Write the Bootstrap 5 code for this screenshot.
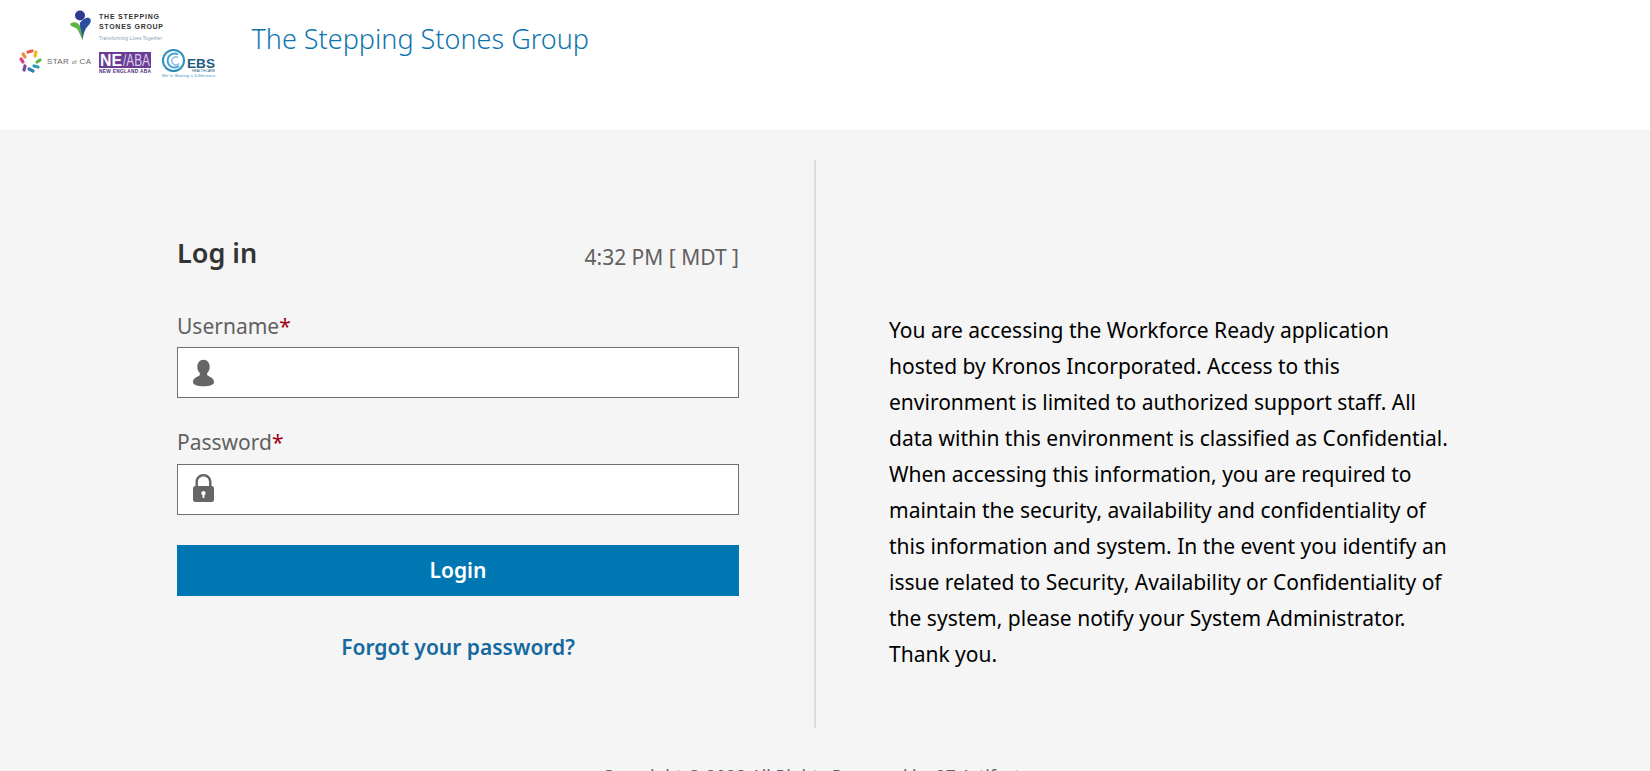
<!DOCTYPE html>
<html lang="en">
<head>
    <meta charset="utf-8">
    <title>Log in</title>
    <link href="https://cdn.jsdelivr.net/npm/bootstrap@5.3.3/dist/css/bootstrap.min.css" rel="stylesheet">
    <script src="https://cdn.jsdelivr.net/npm/bootstrap@5.3.3/dist/js/bootstrap.bundle.min.js"></script>
    <style>
        html, body { height: 771px; overflow: hidden; }
        body { font-family: "Noto Sans", "Open Sans", sans-serif; background: #f5f5f5; color: #000; }
        .top-bar { height: 130px; background: #fff; }
        .top-logo { width: 225px; height: 90px; flex: none; }
        .top-title { font-size: 27px; font-weight: 300; color: #0f75b0; margin: 21px 0 0 26.500px; line-height: 36px; }
        .main-area { height: 598px; padding-top: 30px; }
        .left-pane { width: 816px; height: 568px; padding: 75px 75px 0 177px; border-right: 2px solid #dcdcdc; flex: none; }
        .right-pane { padding: 0 0 0 73px; width: 680px; font-size: 21px; line-height: 36px; margin-top: 152px; }
        .login-title { font-size: 27px; font-weight: 600; color: #333; line-height: 36px; margin: 0; }
        .login-time { font-size: 21px; color: #616161; line-height: 36px; margin-top: 4px; }
        .login-head { margin-bottom: 37px; }
        .field-label { font-size: 21px; color: #616161; line-height: 28px; margin-bottom: 7px; display: block; }
        .field-label b { color: #a00016; font-weight: 400; }
        .field-box { height: 51px; background: #fff; border: 1px solid #707070; padding-left: 15px; margin-bottom: 30px; }
        .field-box svg { width: 21px; height: 28px; fill: #666; flex: none; }
        .field-box .lock-icon { margin-bottom: 3px; }
        .field-box input { border: 0; outline: 0; background: transparent; flex: 1; height: 100%; min-width: 0; }
        .btn-login { height: 51px; width: 100%; background: #0077b3; color: #fff; border: 0; border-radius: 0; font-weight: 600; font-size: 21px; }
        .btn-login:hover { background: #00689c; color: #fff; }
        .forgot-link { display: block; margin-top: 37px; text-align: center; font-size: 21px; font-weight: 600; color: #14699f; text-decoration: none; line-height: 28px; }
        .page-foot { font-size: 17.500px; color: #616161; text-align: center; line-height: 24px; padding: 36px 28px 0 0; }
    </style>
</head>
<body>
    <header class="top-bar d-flex align-items-start">
        <svg class="top-logo" viewBox="0 0 225 90" font-family="Liberation Sans, sans-serif">
            <circle cx="80" cy="15.500" r="5" fill="#2e3a8c"/>
            <path d="M80 23c2-3 6-6 9-5 3 1 2 5-1 8-3 3-5 8-5 14-3-5-4-11-3-17z" fill="#2a4f9e"/>
            <path d="M70 24c3-3 8-2 10 2 1 4 2 8 3 14-3-4-4-10-7-12-2-1-5-1-6-4z" fill="#5db346"/>
            <text x="99" y="19" font-size="7" font-weight="700" fill="#333" textLength="60">THE STEPPING</text>
            <text x="99" y="29" font-size="7" font-weight="700" fill="#333" textLength="64">STONES GROUP</text>
            <text x="99" y="40" font-size="4.500" fill="#7a9db5" textLength="63">Transforming Lives Together</text>
            <g fill="none" stroke-width="3.200" stroke-linecap="round">
                <path d="M28 52l4-1" stroke="#e8594b"/><path d="M36 52l-1 4" stroke="#f1b51c"/><path d="M40 60l-3 2" stroke="#5db346"/>
                <path d="M38 67l-4-1" stroke="#2a9db5"/><path d="M33 71l-4-2" stroke="#2a7fb5"/><path d="M24 70l1-4" stroke="#7a4aa0"/>
                <path d="M23 62l-2-3" stroke="#d9417e"/><path d="M23 54l2 3" stroke="#f08a3c"/>
            </g>
            <text x="47" y="64" font-size="8" fill="#666" textLength="44">STAR <tspan font-size="5.500">of</tspan> CA</text>
            <rect x="99" y="52" width="52" height="16" fill="#6a3d97"/>
            <text x="100" y="66" font-size="17" font-weight="700" fill="#fff" textLength="22" lengthAdjust="spacingAndGlyphs">NE</text>
            <text x="123" y="66" font-size="16" fill="#d9cce8" textLength="27" lengthAdjust="spacingAndGlyphs">/ABA</text>
            <text x="99" y="72.500" font-size="4.800" font-weight="700" fill="#4e2a80" textLength="52">NEW ENGLAND ABA</text>
            <circle cx="173.500" cy="60.500" r="10.500" fill="#fff" stroke="#2e8fc0" stroke-width="2"/>
            <path d="M178 54.500a7 7 0 1 0 1 11.500" fill="none" stroke="#4aa3cf" stroke-width="2"/>
            <path d="M178 57.500a4 4 0 1 0 1 6" fill="none" stroke="#8cc5e0" stroke-width="1.500"/>
            <text x="187" y="68" font-size="13" font-weight="700" fill="#1c5a80" textLength="28" lengthAdjust="spacingAndGlyphs">EBS</text>
            <text x="192" y="72" font-size="3.400" fill="#1c5a80" textLength="23">HEALTHCARE</text>
            <text x="162" y="76.500" font-size="3.800" fill="#2e8fc0" textLength="53">We're Making a Difference</text>
        </svg>
        <div class="top-title">The Stepping Stones Group</div>
    </header>
    <main class="main-area d-flex">
        <section class="left-pane">
            <div class="login-head d-flex justify-content-between align-items-start">
                <h1 class="login-title">Log in</h1>
                <span class="login-time">4:32 PM [ MDT ]</span>
            </div>
            <form onsubmit="return false;">
                <label class="field-label" for="username">Username<b>*</b></label>
                <div class="field-box d-flex align-items-center gap-2">
                    <svg viewBox="0 0 22 28"><path d="M11 0c3.600 0 6.500 2.900 6.500 7.500 0 2.800-1 5-2.500 6.500-.6.600-.4 2.200.6 2.800 2.600 1.600 6.400 2.400 6.400 6.700 0 3-4.700 4.500-11 4.500S0 26.500 0 23.500c0-4.300 3.800-5.100 6.400-6.700 1-.6 1.200-2.200.6-2.800C5.500 12.500 4.500 10.300 4.500 7.500 4.500 2.900 7.400 0 11 0z"/></svg>
                    <input id="username" type="text">
                </div>
                <label class="field-label mb-2" for="password">Password<b>*</b></label>
                <div class="field-box d-flex align-items-center gap-2">
                    <svg class="lock-icon" viewBox="0 0 21 28"><path fill-rule="evenodd" d="M10.500 0c4.500 0 8 3.300 8 8v4h.2c1.300 0 2.300 1 2.300 2.300v11.400c0 1.300-1 2.300-2.300 2.300H2.300C1 28 0 27 0 25.700V14.300C0 13 1 12 2.300 12h.2V8c0-4.700 3.500-8 8-8zm0 2.500c-3.100 0-5.500 2.300-5.500 5.500v4h11V8c0-3.200-2.400-5.500-5.500-5.500zm0 14.500a2.200 2.200 0 0 0-.9 4.200V24h1.800v-2.800a2.200 2.200 0 0 0-.9-4.200z"/></svg>
                    <input id="password" type="password">
                </div>
                <button class="btn btn-login" type="submit">Login</button>
                <a class="forgot-link" href="#">Forgot your password?</a>
            </form>
        </section>
        <section class="right-pane">
            You are accessing the Workforce Ready application<br>
            hosted by Kronos Incorporated. Access to this<br>
            environment is limited to authorized support staff. All<br>
            data within this environment is classified as Confidential.<br>
            When accessing this information, you are required to<br>
            maintain the security, availability and confidentiality of<br>
            this information and system. In the event you identify an<br>
            issue related to Security, Availability or Confidentiality of<br>
            the system, please notify your System Administrator.<br>
            Thank you.
        </section>
    </main>
    <footer class="page-foot">Copyright © 2023 All Rights Reserved by 27 Artifact</footer>
</body>
</html>
